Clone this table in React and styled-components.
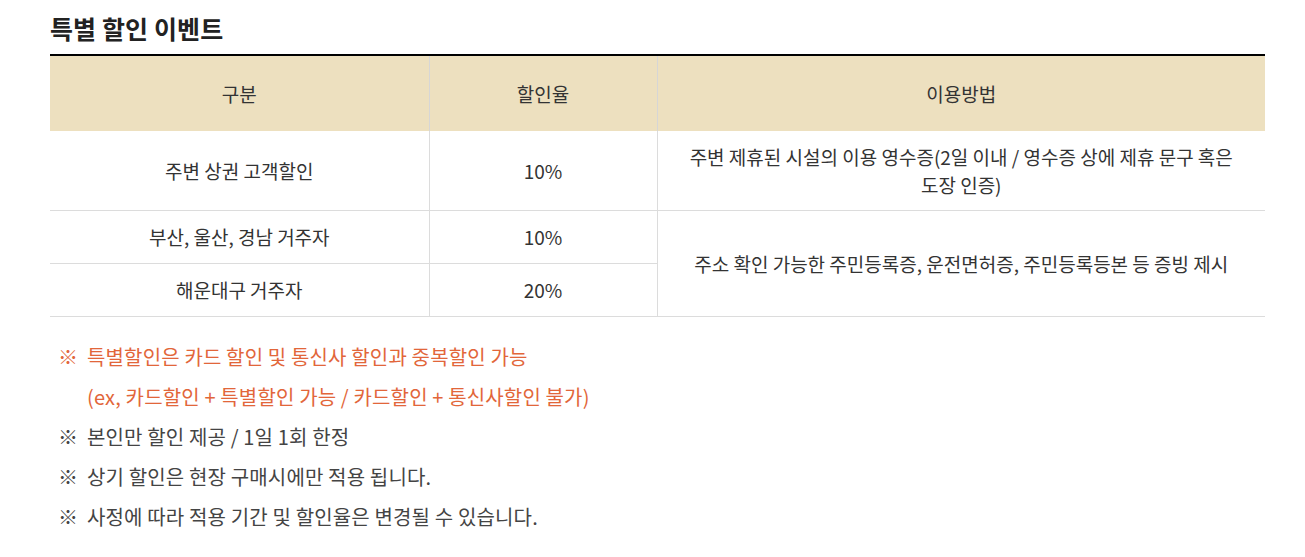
import React from 'react';
import styled, { createGlobalStyle } from 'styled-components';

const GlobalStyle = createGlobalStyle`
  body {
    margin: 0;
    background: #fff;
    font-family: "Noto Sans CJK KR", "Noto Sans", sans-serif;
    color: #333;
  }
`;

const Section = styled.section`
  width: 1215px;
  padding: 12px 0 0 50px;
`;

const Title = styled.h2`
  margin: 0 0 10px;
  font-size: 25px;
  line-height: 32px;
  font-weight: 700;
  color: #222;
  letter-spacing: 0.1px;
`;

const Table = styled.table`
  width: 100%;
  border-collapse: collapse;
  border-top: 2px solid #000;
  table-layout: fixed;
  font-size: 19px;
  color: #333;
  word-break: keep-all;
`;

const Th = styled.th`
  height: 75px;
  padding: 0;
  background: #ede0bf;
  font-weight: 400;
  text-align: center;
  border-left: 1px solid #d6d6d6;
  &:first-child { border-left: 0; }
`;

const Td = styled.td`
  height: ${p => p.$h}px;
  padding: 0 20px;
  text-align: center;
  line-height: 28px;
  border-bottom: 1px solid #dcdcdc;
  border-left: 1px solid #dcdcdc;
  &:first-child { border-left: 0; }
`;

const Notes = styled.ul`
  list-style: none;
  margin: 20px 0 0;
  padding: 0 0 0 8px;
  font-size: 20px;
  line-height: 40px;
  color: #444;
  letter-spacing: 0.15px;
`;

const Note = styled.li`
  color: ${p => (p.$accent ? '#e2663a' : '#444')};
  padding-left: ${p => (p.$sub ? '29px' : '0')};
`;

const Mark = styled.span`
  display: inline-block;
  width: 29px;
`;

const rows = [
  { name: '주변 상권 고객할인', rate: '10%', h: 79, how: '주변 제휴된 시설의 이용 영수증(2일 이내 / 영수증 상에 제휴 문구 혹은 도장 인증)' },
  { name: '부산, 울산, 경남 거주자', rate: '10%', h: 52, how: '주소 확인 가능한 주민등록증, 운전면허증, 주민등록등본 등 증빙 제시', span: 2 },
  { name: '해운대구 거주자', rate: '20%', h: 52 },
];

export default function App() {
  return (
    <Section>
      <GlobalStyle />
      <Title>특별 할인 이벤트</Title>
      <Table>
        <colgroup>
          <col style={{ width: 379 }} />
          <col style={{ width: 228 }} />
          <col />
        </colgroup>
        <thead>
          <tr>
            <Th>구분</Th>
            <Th>할인율</Th>
            <Th>이용방법</Th>
          </tr>
        </thead>
        <tbody>
          {rows.map(r => (
            <tr key={r.name}>
              <Td $h={r.h}>{r.name}</Td>
              <Td $h={r.h}>{r.rate}</Td>
              {r.how && <Td $h={r.h} rowSpan={r.span || 1}>{r.how}</Td>}
            </tr>
          ))}
        </tbody>
      </Table>
      <Notes>
        <Note $accent><Mark>※</Mark>특별할인은 카드 할인 및 통신사 할인과 중복할인 가능</Note>
        <Note $accent $sub>(ex, 카드할인 + 특별할인 가능 / 카드할인 + 통신사할인 불가)</Note>
        <Note><Mark>※</Mark>본인만 할인 제공 / 1일 1회 한정</Note>
        <Note><Mark>※</Mark>상기 할인은 현장 구매시에만 적용 됩니다.</Note>
        <Note><Mark>※</Mark>사정에 따라 적용 기간 및 할인율은 변경될 수 있습니다.</Note>
      </Notes>
    </Section>
  );
}
